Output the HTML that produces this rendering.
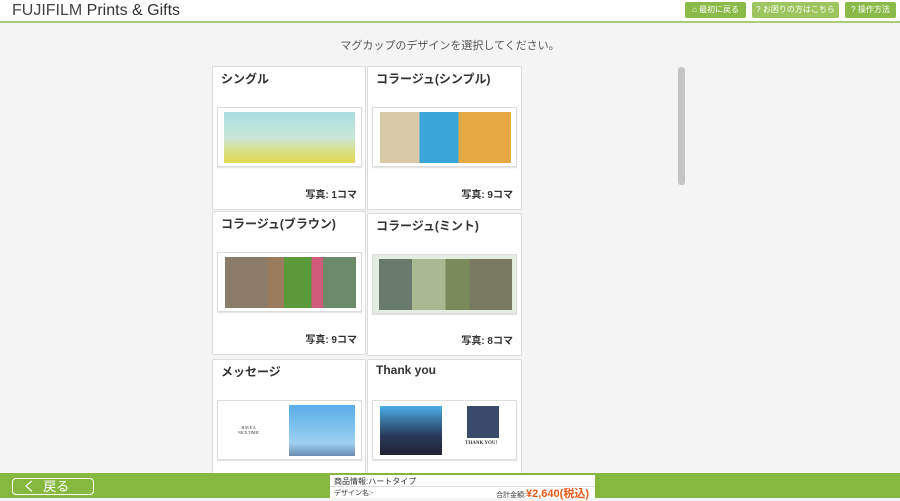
<!DOCTYPE html>
<html><head><meta charset="utf-8"><style>
*{margin:0;padding:0;box-sizing:border-box}
body{width:900px;height:498px;overflow:hidden;background:#f4f4f4;font-family:"Liberation Sans","Noto Sans CJK JP",sans-serif;position:relative;color:#333}
.abs{position:absolute}
.hdr{left:0;top:0;width:900px;height:23px;background:#fff;border-bottom:2px solid #a9cc74}
.logo{left:12px;top:2px;font-size:16px;color:#444;white-space:nowrap}
.btn{top:2px;height:16px;background:#8abb48;color:#fff;font-size:8px;line-height:16px;text-align:center;border-radius:2px}
.title{left:0;width:900px;top:37px;text-align:center;font-size:11px;color:#555}
.card{background:#fff;border:1px solid #dcdcdc;border-radius:2px}
.card .t{position:absolute;left:8px;top:3px;font-size:12px;font-weight:bold;color:#333}
.card .c{position:absolute;right:8px;font-size:10px;font-weight:bold;color:#333}
.fr{position:absolute;left:4px;width:145px;height:60px;border:1px solid #ddd;background:#fff;box-shadow:0 1px 1px #e0e0e0}
.im{position:absolute}
.foot{left:0;top:473px;width:900px;height:25px;background:#86b840}
</style></head><body>
<div class="abs hdr"></div>
<div class="abs logo">FUJIFILM <span style="color:#333">Prints &amp; Gifts</span></div>
<div class="abs btn" style="left:685px;width:61px">⌂ 最初に戻る</div>
<div class="abs btn" style="left:752px;width:87px;background:#9cc55e">? お困りの方はこちら</div>
<div class="abs btn" style="left:845px;width:51px">? 操作方法</div>
<div class="abs title">マグカップのデザインを選択してください。</div>

<div class="abs card" style="left:212px;top:66px;width:154px;height:144px">
 <div class="t">シングル</div>
 <div class="fr" style="top:40px"><div class="im" style="left:6px;top:4px;width:131px;height:51px;background:linear-gradient(180deg,#a8dde0 0%,#c9e6d8 50%,#d8df8a 75%,#e4d850 100%)"></div></div>
 <div class="c" style="top:119px">写真: 1コマ</div>
</div>
<div class="abs card" style="left:367px;top:66px;width:155px;height:144px">
 <div class="t">コラージュ(シンプル)</div>
 <div class="fr" style="top:40px"><div class="im" style="left:7px;top:4px;width:131px;height:51px;background:linear-gradient(90deg,#d9c9a8 0 30%,#38a6d6 30% 60%,#e6a840 60% 100%)"></div></div>
 <div class="c" style="top:119px">写真: 9コマ</div>
</div>

<div class="abs card" style="left:212px;top:211px;width:154px;height:144px">
 <div class="t">コラージュ(ブラウン)</div>
 <div class="fr" style="top:40px"><div class="im" style="left:7px;top:4px;width:131px;height:51px;background:linear-gradient(90deg,#8a7c68 0 33%,#9a7c5c 33% 45%,#5a9a3a 45% 66%,#d05a7a 66% 75%,#6a8a6a 75% 100%)"></div></div>
 <div class="c" style="top:119px">写真: 9コマ</div>
</div>
<div class="abs card" style="left:367px;top:213px;width:155px;height:143px">
 <div class="t">コラージュ(ミント)</div>
 <div class="fr" style="top:40px;background:#e4eee0"><div class="im" style="left:6px;top:4px;width:133px;height:51px;background:linear-gradient(90deg,#6a7a6a 0 25%,#a8b890 25% 50%,#7a8a5a 50% 68%,#7a7a60 68% 100%)"></div></div>
 <div class="c" style="top:118px">写真: 8コマ</div>
</div>

<div class="abs card" style="left:212px;top:359px;width:154px;height:120px">
 <div class="t">メッセージ</div>
 <div class="fr" style="top:40px"><div style="position:absolute;left:20px;top:24px;font-size:4px;font-family:'Liberation Serif',serif;text-align:center">HAVE A<br>NICE TIME!</div><div class="im" style="left:71px;top:4px;width:66px;height:51px;background:linear-gradient(180deg,#5aaee8,#9ccff0 75%,#6a8ab0)"></div></div>
</div>
<div class="abs card" style="left:367px;top:359px;width:155px;height:120px">
 <div class="t">Thank you</div>
 <div class="fr" style="top:40px"><div class="im" style="left:7px;top:5px;width:62px;height:49px;background:linear-gradient(180deg,#4aaee6,#2a3a5a 60%,#223)"></div><div class="im" style="left:94px;top:5px;width:32px;height:32px;background:#3a4a6a"></div><div style="position:absolute;left:92px;top:40px;font-size:5px;font-weight:bold;font-family:'Liberation Serif',serif">THANK YOU!</div></div>
</div>

<div class="abs" style="left:678px;top:67px;width:7px;height:118px;background:#c4c4c4;border-radius:3px"></div>

<div class="abs foot"></div>
<div class="abs" style="left:12px;top:478px;width:82px;height:17px;border:1px solid #fff;border-radius:4px;color:#fff;font-size:13px;line-height:15px;padding-left:10px">く&nbsp; 戻る</div>
<div class="abs" style="left:330px;top:475px;width:265px;height:23px;background:#fff">
 <div style="position:absolute;left:4px;top:1px;font-size:8px;color:#333">商品情報:ハートタイプ</div>
 <div style="position:absolute;left:0;top:11px;width:265px;border-top:1px solid #ddd"></div>
 <div style="position:absolute;left:4px;top:13px;font-size:7px;color:#333">デザイン名:-</div>
 <div style="position:absolute;right:6px;top:10px;font-size:7px;color:#333;white-space:nowrap">合計金額:<span style="color:#e85a1a;font-size:11px;font-weight:bold">¥2,640(税込)</span></div>
</div>
</body></html>
